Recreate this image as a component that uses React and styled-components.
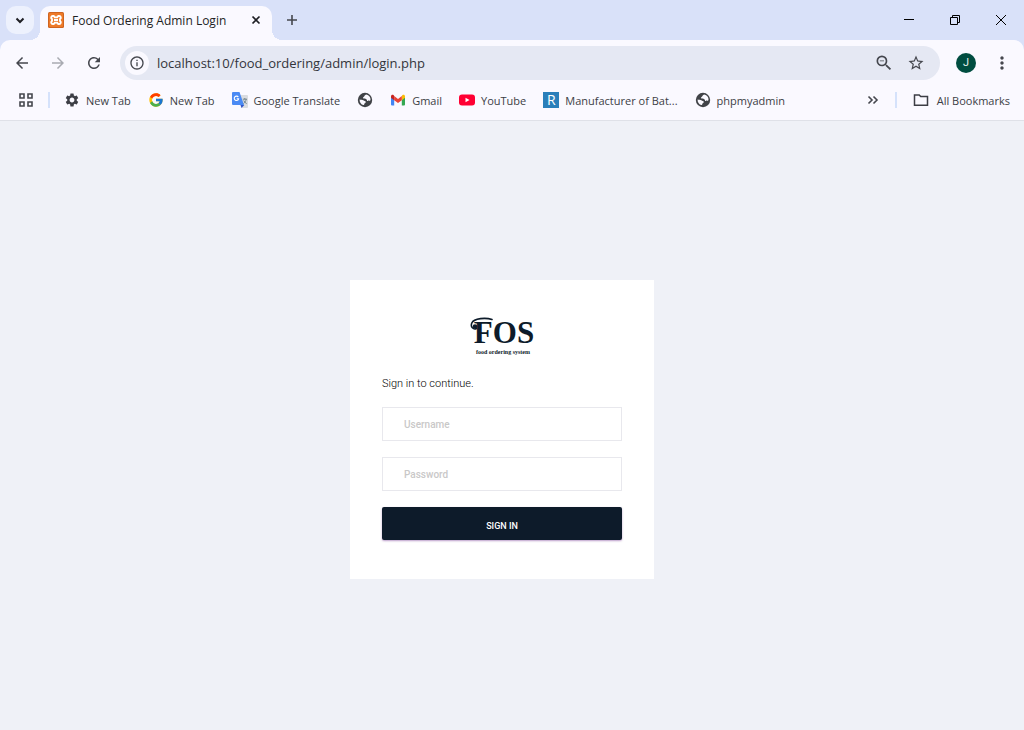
import React from "react";
import styled, { createGlobalStyle } from "styled-components";
import {
  MdArrowBack, MdArrowForward, MdRefresh, MdInfoOutline, MdZoomOut, MdStarBorder,
  MdMoreVert, MdSettings,
} from "react-icons/md";
import { FcGoogle } from "react-icons/fc";

const GlobalStyle = createGlobalStyle`
  * { box-sizing: border-box; }
  body { margin: 0; background: #eff1f7; font-family: "Open Sans", "Noto Sans", sans-serif; }
  button, input { font: inherit; }
`;

const Page = styled.div`
  min-height: 100vh;
  display: flex;
  flex-direction: column;
`;

const TitleBar = styled.header`
  height: 40px;
  display: flex;
  align-items: flex-start;
  background: #d9e1f9;
`;

const IconButton = styled.button`
  display: flex;
  align-items: center;
  justify-content: center;
  flex: none;
  width: ${(p) => p.$w || 28}px;
  height: ${(p) => p.$h || 28}px;
  padding: 0;
  border: 0;
  border-radius: ${(p) => p.$radius || 0}px;
  background: ${(p) => p.$bg || "transparent"};
  color: ${(p) => p.$color || "#45474e"};
`;

const TabSearch = styled(IconButton)`
  margin: 6px 6px 0;
`;

const Tab = styled.div`
  position: relative;
  display: flex;
  align-items: center;
  width: 232px;
  height: 34px;
  margin-top: 6px;
  padding: 0 4px 6px 8px;
  border-radius: 10px 10px 0 0;
  background: #faf9ff;
  font-size: 12px;
  color: #1e1f24;

  &::before, &::after {
    content: "";
    position: absolute;
    bottom: 0;
    width: 10px;
    height: 10px;
  }
  &::before {
    left: -10px;
    background: radial-gradient(circle at 0 0, transparent 10px, #faf9ff 10px);
  }
  &::after {
    right: -10px;
    background: radial-gradient(circle at 100% 0, transparent 10px, #faf9ff 10px);
  }
`;

const TabTitle = styled.span`
  flex: 1;
  padding-left: 8px;
  white-space: nowrap;
`;

const NewTab = styled(IconButton)`
  margin: 6px 0 0 6px;
`;

const WindowControls = styled.div`
  display: flex;
  margin-left: auto;
`;

const Chrome = styled.div`
  background: #d9e1f9;
`;

const Panel = styled.div`
  border-radius: 10px 10px 0 0;
  border-bottom: 1px solid #dfe1e8;
  background: #faf9ff;
`;

const Toolbar = styled.div`
  display: flex;
  align-items: center;
  height: 46px;
  padding: 0 8px;
`;

const NavButtons = styled.nav`
  display: flex;
  gap: 8px;
  margin-right: 12px;
`;

const AddressBar = styled.form`
  display: flex;
  flex: 1;
  align-items: center;
  height: 34px;
  padding: 0 8px 0 5px;
  border-radius: 17px;
  background: #e5e8f3;
`;

const AddressInput = styled.input`
  flex: 1;
  min-width: 0;
  padding: 0;
  border: 0;
  margin-left: 8px;
  background: transparent;
  font-size: 13px;
  color: #33353b;
  outline: none;
`;

const Avatar = styled.span`
  display: flex;
  align-items: center;
  justify-content: center;
  width: 20px;
  height: 20px;
  border-radius: 50%;
  background: #004d40;
  color: #e4efec;
  font: 11px/20px Roboto, sans-serif;
`;

const ProfileButton = styled(IconButton)`
  margin: 0 8px 0 12px;
`;

const BookmarksBar = styled.nav`
  display: flex;
  align-items: center;
  height: 34px;
  padding: 0 14px 6px 12px;
`;

const Divider = styled.span`
  width: 2px;
  height: 16px;
  flex: none;
  margin-left: 8px;
  background: #d5e2fb;
`;

const BookmarkList = styled.div`
  display: flex;
  flex: 1;
  gap: 17px;
  margin-left: 14px;
`;

const Bookmark = styled.a`
  display: flex;
  align-items: center;
  flex: none;
  gap: 6px;
  height: 28px;
  font-size: 11px;
  color: #3c3e45;
  text-decoration: none;
  white-space: nowrap;
`;

const AllBookmarks = styled(Bookmark)`
  margin-left: 16px;
  gap: 8px;
`;

const SiteBadge = styled.span`
  width: 16px;
  height: 16px;
  background: #2a7fba;
  color: #fff;
  font: 14px/16px "Open Sans", sans-serif;
  text-align: center;
`;

const Main = styled.main`
  display: flex;
  flex: 1;
  align-items: flex-start;
  justify-content: center;
  padding: 159px 20px 32px 0;
`;

const Card = styled.form`
  display: flex;
  flex-direction: column;
  width: 304px;
  padding: 36px 32px 39px;
  background: #fff;
  font-family: Roboto, sans-serif;
`;

const Logo = styled.svg`
  display: block;
  align-self: center;
  color: #0d1b2a;
`;

const Intro = styled.p`
  margin: 20px 0 15px;
  font-size: 11px;
  font-weight: 300;
  line-height: 16px;
  color: #000;
`;

const Field = styled.input`
  width: 100%;
  height: 34px;
  margin-bottom: 16px;
  padding: 0 21px;
  border: 1px solid #e8e8ed;
  border-radius: 0;
  background: #fff;
  font-size: 10px;
  font-weight: 500;
  color: #333;
  outline: none;

  &::placeholder { color: #c9c8c8; opacity: 1; }
`;

const SignIn = styled.button`
  height: 33px;
  padding: 4px 0 0;
  border: 0;
  border-radius: 2px;
  background: #0d1b2a;
  box-shadow: 0 1px 2px rgba(120, 60, 150, 0.5);
  font-size: 9px;
  font-weight: 500;
  color: #fff;
`;

const XamppIcon = () => (
  <svg width="16" height="16" viewBox="0 0 16 16" aria-hidden="true">
    <rect width="16" height="16" rx="1.5" fill="#cf6420" />
    <rect x="1" y="1" width="14" height="14" rx="1" fill="#ee7a29" />
    <path d="M5.500 4H4.800a1.600 1.600 0 0 0-.8 3v2a1.600 1.600 0 0 0 .8 3h.7a1.400 1.400 0 0 0 1.300-1.400h2.400A1.400 1.400 0 0 0 10.500 12h.7a1.600 1.600 0 0 0 .8-3V7a1.600 1.600 0 0 0-.8-3h-.7a1.400 1.400 0 0 0-1.300 1.400H6.800A1.400 1.400 0 0 0 5.500 4Z" fill="none" stroke="#fff" strokeWidth="1.900" />
    <path d="M6 8h4" stroke="#fff" strokeWidth="2" />
  </svg>
);

const TranslateIcon = () => (
  <svg width="16" height="16" viewBox="0 0 16 16" aria-hidden="true">
    <path d="M6 3h9a1 1 0 0 1 1 1v11a1 1 0 0 1-1 1H9.500Z" fill="#dadce0" />
    <path d="M9.500 16 8.500 13h3.800Z" fill="#3055c8" />
    <path d="M1 0h6.500l4.500 13H1a1 1 0 0 1-1-1V1a1 1 0 0 1 1-1Z" fill="#4a8af4" />
    <path d="M6.300 5.100A2.200 2.200 0 1 0 6.600 6.800H4.700" fill="none" stroke="#fff" strokeWidth="1.100" />
    <path d="M10.800 7.200h4.200M12.800 6v1.200M14.200 7.200c-.4 2-1.500 3.500-2.700 4.300M11.700 8.500c.6 1.400 1.600 2.300 3 3.200" fill="none" stroke="#6b7f86" strokeWidth=".9" />
  </svg>
);

const GlobeIcon = () => (
  <svg width="16" height="16" viewBox="0 0 16 16" aria-hidden="true">
    <circle cx="8" cy="8" r="7.200" fill="#404347" />
    <path d="M9.200 2.600C7.600 3 7.800 4.400 6.600 4.900 5.600 5.300 5.800 6.300 6.700 6.600c1.300.3 2.300.1 3 1.200.4.800 1.600.4 2.400.9.900.5 1.200-.2 1.400-.9.200-2.200-1.300-4.500-4.300-5.200Z" fill="#faf9ff" />
    <path d="M2.600 7.400c1.400.2 2.800.2 3.700.9.900.8 2.400.5 2.500 1.600 0 .9-1.200 1-1.400 1.800-.2.700-.4 1.500-1 1.400C4 12.500 2.400 10 2.600 7.400Z" fill="#faf9ff" />
  </svg>
);

const GmailIcon = () => (
  <svg width="16" height="16" viewBox="0 0 16 16" aria-hidden="true">
    <path d="M1 5v7.500A1 1 0 0 0 2 13.500h2.200V6.500Z" fill="#4285f4" />
    <path d="M15 5v7.500a1 1 0 0 1-1 1h-2.200V6.500Z" fill="#34a853" />
    <path d="M11.800 4v4.200L15 5.800V4.300c0-1.500-1.600-2-2.500-1.200Z" fill="#fbbc04" />
    <path d="M4.200 8.200V4L8 6.900 11.800 4v4.200L8 11Z" fill="#ea4335" />
    <path d="M1 4.300v1.500l3.200 2.400V4l-.7-.9C2.600 2.300 1 2.800 1 4.300Z" fill="#c5221f" />
  </svg>
);

const YouTubeIcon = () => (
  <svg width="16" height="16" viewBox="0 0 16 16" aria-hidden="true">
    <rect y="2.500" width="16" height="11" rx="3" fill="#f03" />
    <path d="M6.500 5.700v4.600l4-2.300Z" fill="#fff" />
  </svg>
);

const LineIcon = ({ size, width = 2, d }) => (
  <svg width={size} height={size} viewBox={`0 0 ${size} ${size}`} fill="none" stroke="currentColor" strokeWidth={width} aria-hidden="true">
    <path d={d} />
  </svg>
);

const FosLogo = () => (
  <Logo width="64" height="40" viewBox="0 0 64 40" role="img" aria-label="FOS food ordering system">
    <path d="M22 3.500C16 1.500 4 2 1.800 7c-1.600 4 1.600 7 4.700 5.500" fill="none" stroke="currentColor" strokeWidth="1.600" strokeLinecap="round" />
    <circle cx="5" cy="10.500" r="2.300" fill="currentColor" />
    <text x="34" y="27" textAnchor="middle" fill="currentColor" fontFamily="Liberation Serif, serif" fontWeight="700" fontSize="31">FOS</text>
    <text x="33" y="38" textAnchor="middle" fill="currentColor" fontFamily="Liberation Serif, serif" fontWeight="700" fontSize="6">food ordering system</text>
  </Logo>
);

const BOOKMARKS = [
  { label: "New Tab", icon: <MdSettings size={16} /> },
  { label: "New Tab", icon: <FcGoogle size={16} /> },
  { label: "Google Translate", icon: <TranslateIcon /> },
  { label: "", icon: <GlobeIcon /> },
  { label: "Gmail", icon: <GmailIcon /> },
  { label: "YouTube", icon: <YouTubeIcon /> },
  { label: "Manufacturer of Bat...", icon: <SiteBadge>R</SiteBadge> },
  { label: "phpmyadmin", icon: <GlobeIcon /> },
];

export default function App() {
  return (
    <Page>
      <GlobalStyle />
      <TitleBar>
        <TabSearch $radius={10} $bg="#edf1fd" $color="#1e1f24" aria-label="Search tabs">
          <LineIcon size={16} d="M4.500 6.500 8 10l3.500-3.500" />
        </TabSearch>
        <Tab>
          <XamppIcon />
          <TabTitle>Food Ordering Admin Login</TabTitle>
          <IconButton $w={24} $h={24} $color="#1e1f24" aria-label="Close tab">
            <LineIcon size={16} width={1.7} d="M4.500 4.500l7 7M11.500 4.500l-7 7" />
          </IconButton>
        </Tab>
        <NewTab aria-label="New tab"><LineIcon size={16} width={1.6} d="M8 3v10M3 8h10" /></NewTab>
        <WindowControls>
          <IconButton $w={46} $h={40} $color="#000" aria-label="Minimize"><LineIcon size={12} width={1} d="M1 5.500h10" /></IconButton>
          <IconButton $w={46} $h={40} $color="#000" aria-label="Restore"><LineIcon size={12} width={1} d="M1.500 3.500h7v7h-7ZM3.500 3.500v-2h7v7h-2" /></IconButton>
          <IconButton $w={46} $h={40} $color="#000" aria-label="Close"><LineIcon size={12} width={1} d="M1 1l10 10M11 1 1 11" /></IconButton>
        </WindowControls>
      </TitleBar>
      <Chrome>
        <Panel>
          <Toolbar>
            <NavButtons>
              <IconButton aria-label="Back"><MdArrowBack size={18} /></IconButton>
              <IconButton $color="#a9abb2" aria-label="Forward"><MdArrowForward size={18} /></IconButton>
              <IconButton aria-label="Reload"><MdRefresh size={18} /></IconButton>
            </NavButtons>
            <AddressBar>
              <IconButton type="button" $w={24} $h={24} $radius={12} $bg="#faf9ff" aria-label="Site information"><MdInfoOutline size={16} /></IconButton>
              <AddressInput aria-label="Address" defaultValue="localhost:10/food_ordering/admin/login.php" />
              <IconButton type="button" $w={32} aria-label="Zoom"><MdZoomOut size={20} /></IconButton>
              <IconButton type="button" $w={32} aria-label="Bookmark this page"><MdStarBorder size={18} /></IconButton>
            </AddressBar>
            <ProfileButton aria-label="Profile"><Avatar>J</Avatar></ProfileButton>
            <IconButton aria-label="Menu"><MdMoreVert size={20} /></IconButton>
          </Toolbar>
          <BookmarksBar>
            <IconButton aria-label="Apps">
              <LineIcon size={16} width={1.6} d="M2 2h4v4H2ZM10 2h4v4h-4ZM2 10h4v4H2ZM10 10h4v4h-4Z" />
            </IconButton>
            <Divider />
            <BookmarkList>
              {BOOKMARKS.map((b, i) => (
                <Bookmark key={i} href="#" aria-label={b.label || "Site"}>{b.icon}{b.label}</Bookmark>
              ))}
            </BookmarkList>
            <IconButton aria-label="More bookmarks"><LineIcon size={16} width={1.6} d="M3.500 4.500 7 8l-3.500 3.500M8.500 4.500 12 8l-3.500 3.500" /></IconButton>
            <Divider />
            <AllBookmarks href="#">
              <LineIcon size={16} width={1.5} d="M1.500 3h4.700l1.500 1.500h6.800v8.700h-13Z" />
              All Bookmarks
            </AllBookmarks>
          </BookmarksBar>
        </Panel>
      </Chrome>
      <Main>
        <Card>
          <FosLogo />
          <Intro>Sign in to continue.</Intro>
          <Field type="text" placeholder="Username" aria-label="Username" />
          <Field type="password" placeholder="Password" aria-label="Password" />
          <SignIn type="submit">SIGN IN</SignIn>
        </Card>
      </Main>
    </Page>
  );
}
